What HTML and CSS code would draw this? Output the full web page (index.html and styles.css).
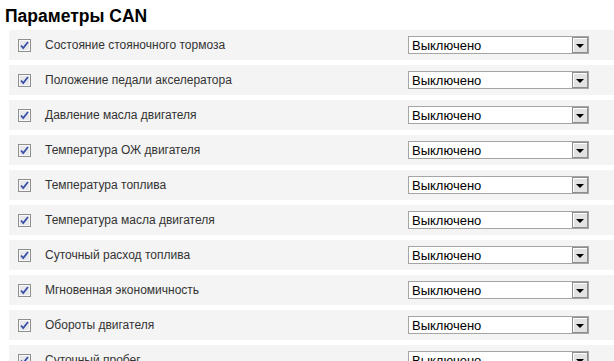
FILE: index.html
```html
<!DOCTYPE html>
<html lang="ru">
<head>
    <meta charset="UTF-8">
    <meta name="viewport" content="width=device-width, initial-scale=1.0">
    <title>Параметры CAN</title>
    <link rel="stylesheet" href="styles.css">
</head>
<body>
    <div class="page">
        <h1 class="page-title">Параметры CAN</h1>

        <!-- CAN parameter list -->
        <div class="param-list">
            <div class="param-row">
                <span class="check"><svg width="13" height="13" viewBox="0 0 13 13"><rect x="0.5" y="0.5" width="12" height="12" fill="#f0f0f0" stroke="#8e8f8f"/><rect x="1.5" y="1.5" width="10" height="10" fill="#e6e8ec" stroke="#f8f8f8"/><path d="M3 6.5 L5.2 9 L10 3" fill="none" stroke="#3a4fa6" stroke-width="1.8"/></svg></span>
                <span class="param-label">Состояние стояночного тормоза</span>
                <div class="select-box"><span class="select-value">Выключено</span><span class="select-arrow"></span></div>
            </div>
            <div class="param-row">
                <span class="check"><svg width="13" height="13" viewBox="0 0 13 13"><rect x="0.5" y="0.5" width="12" height="12" fill="#f0f0f0" stroke="#8e8f8f"/><rect x="1.5" y="1.5" width="10" height="10" fill="#e6e8ec" stroke="#f8f8f8"/><path d="M3 6.5 L5.2 9 L10 3" fill="none" stroke="#3a4fa6" stroke-width="1.8"/></svg></span>
                <span class="param-label">Положение педали акселератора</span>
                <div class="select-box"><span class="select-value">Выключено</span><span class="select-arrow"></span></div>
            </div>
            <div class="param-row">
                <span class="check"><svg width="13" height="13" viewBox="0 0 13 13"><rect x="0.5" y="0.5" width="12" height="12" fill="#f0f0f0" stroke="#8e8f8f"/><rect x="1.5" y="1.5" width="10" height="10" fill="#e6e8ec" stroke="#f8f8f8"/><path d="M3 6.5 L5.2 9 L10 3" fill="none" stroke="#3a4fa6" stroke-width="1.8"/></svg></span>
                <span class="param-label">Давление масла двигателя</span>
                <div class="select-box"><span class="select-value">Выключено</span><span class="select-arrow"></span></div>
            </div>
            <div class="param-row">
                <span class="check"><svg width="13" height="13" viewBox="0 0 13 13"><rect x="0.5" y="0.5" width="12" height="12" fill="#f0f0f0" stroke="#8e8f8f"/><rect x="1.5" y="1.5" width="10" height="10" fill="#e6e8ec" stroke="#f8f8f8"/><path d="M3 6.5 L5.2 9 L10 3" fill="none" stroke="#3a4fa6" stroke-width="1.8"/></svg></span>
                <span class="param-label">Температура ОЖ двигателя</span>
                <div class="select-box"><span class="select-value">Выключено</span><span class="select-arrow"></span></div>
            </div>
            <div class="param-row">
                <span class="check"><svg width="13" height="13" viewBox="0 0 13 13"><rect x="0.5" y="0.5" width="12" height="12" fill="#f0f0f0" stroke="#8e8f8f"/><rect x="1.5" y="1.5" width="10" height="10" fill="#e6e8ec" stroke="#f8f8f8"/><path d="M3 6.5 L5.2 9 L10 3" fill="none" stroke="#3a4fa6" stroke-width="1.8"/></svg></span>
                <span class="param-label">Температура топлива</span>
                <div class="select-box"><span class="select-value">Выключено</span><span class="select-arrow"></span></div>
            </div>
            <div class="param-row">
                <span class="check"><svg width="13" height="13" viewBox="0 0 13 13"><rect x="0.5" y="0.5" width="12" height="12" fill="#f0f0f0" stroke="#8e8f8f"/><rect x="1.5" y="1.5" width="10" height="10" fill="#e6e8ec" stroke="#f8f8f8"/><path d="M3 6.5 L5.2 9 L10 3" fill="none" stroke="#3a4fa6" stroke-width="1.8"/></svg></span>
                <span class="param-label">Температура масла двигателя</span>
                <div class="select-box"><span class="select-value">Выключено</span><span class="select-arrow"></span></div>
            </div>
            <div class="param-row">
                <span class="check"><svg width="13" height="13" viewBox="0 0 13 13"><rect x="0.5" y="0.5" width="12" height="12" fill="#f0f0f0" stroke="#8e8f8f"/><rect x="1.5" y="1.5" width="10" height="10" fill="#e6e8ec" stroke="#f8f8f8"/><path d="M3 6.5 L5.2 9 L10 3" fill="none" stroke="#3a4fa6" stroke-width="1.8"/></svg></span>
                <span class="param-label">Суточный расход топлива</span>
                <div class="select-box"><span class="select-value">Выключено</span><span class="select-arrow"></span></div>
            </div>
            <div class="param-row">
                <span class="check"><svg width="13" height="13" viewBox="0 0 13 13"><rect x="0.5" y="0.5" width="12" height="12" fill="#f0f0f0" stroke="#8e8f8f"/><rect x="1.5" y="1.5" width="10" height="10" fill="#e6e8ec" stroke="#f8f8f8"/><path d="M3 6.5 L5.2 9 L10 3" fill="none" stroke="#3a4fa6" stroke-width="1.8"/></svg></span>
                <span class="param-label">Мгновенная экономичность</span>
                <div class="select-box"><span class="select-value">Выключено</span><span class="select-arrow"></span></div>
            </div>
            <div class="param-row">
                <span class="check"><svg width="13" height="13" viewBox="0 0 13 13"><rect x="0.5" y="0.5" width="12" height="12" fill="#f0f0f0" stroke="#8e8f8f"/><rect x="1.5" y="1.5" width="10" height="10" fill="#e6e8ec" stroke="#f8f8f8"/><path d="M3 6.5 L5.2 9 L10 3" fill="none" stroke="#3a4fa6" stroke-width="1.8"/></svg></span>
                <span class="param-label">Обороты двигателя</span>
                <div class="select-box"><span class="select-value">Выключено</span><span class="select-arrow"></span></div>
            </div>
            <div class="param-row">
                <span class="check"><svg width="13" height="13" viewBox="0 0 13 13"><rect x="0.5" y="0.5" width="12" height="12" fill="#f0f0f0" stroke="#8e8f8f"/><rect x="1.5" y="1.5" width="10" height="10" fill="#e6e8ec" stroke="#f8f8f8"/><path d="M3 6.5 L5.2 9 L10 3" fill="none" stroke="#3a4fa6" stroke-width="1.8"/></svg></span>
                <span class="param-label">Суточный пробег</span>
                <div class="select-box"><span class="select-value">Выключено</span><span class="select-arrow"></span></div>
            </div>
        </div>
    </div>
</body>
</html>
```

FILE: styles.css
```css
html {
    overflow: hidden;
}

body {
    font-family: 'Liberation Sans', Arial, sans-serif;
    background-color: #ffffff;
    color: #333333;
    margin: 0;
}

.page {
    width: 614px;
}

.page-title {
    font-size: 17.5px;
    font-weight: bold;
    color: #000000;
    line-height: 19px;
    margin: 0;
    padding: 7px 5px 4px;
}

.param-list {
    display: flex;
    flex-direction: column;
    gap: 5px;
    margin-left: 9px;
}

.param-row {
    display: flex;
    align-items: center;
    height: 30px;
    padding-left: 9px;
    background-color: #f4f4f4;
}

.check {
    display: flex;
    width: 13px;
    height: 13px;
    margin-right: 14px;
}

.param-label {
    width: 363px;
    font-size: 12px;
    color: #333333;
}

.select-box {
    display: flex;
    align-items: center;
    justify-content: space-between;
    box-sizing: border-box;
    width: 181px;
    height: 18px;
    border: 1px solid #a5a5a5;
    background-color: #ffffff;
}

.select-value {
    padding-left: 3px;
    font-size: 13px;
    color: #000000;
}

.select-arrow {
    display: flex;
    align-items: center;
    justify-content: center;
    box-sizing: border-box;
    width: 16px;
    height: 16px;
    border: 1px solid #8d8d8d;
    background-color: #e2e2e2;
    box-shadow: inset 1px 1px #ffffff;
}

.select-arrow::after {
    content: "";
    margin-top: 2px;
    border-left: 4px solid transparent;
    border-right: 4px solid transparent;
    border-top: 4px solid #000000;
}
```
